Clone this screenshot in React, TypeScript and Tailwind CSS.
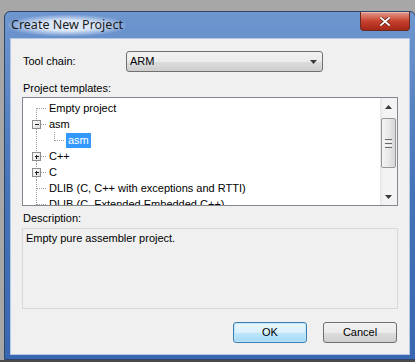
import React from "react";

const dot = "#9a9a9a";

function Gutter({ kind, first }: { kind: "leaf" | "minus" | "plus" | "child"; first?: boolean }) {
  const w = kind === "child" ? 43 : 26;
  return (
    <svg width={w} height={16} className="shrink-0" shapeRendering="crispEdges">
      {kind === "leaf" && (
        <>
          <line x1={13.5} y1={first ? 8 : 0} x2={13.5} y2={16} stroke={dot} strokeDasharray="1 1" />
          <line x1={14} y1={8.5} x2={24} y2={8.5} stroke={dot} strokeDasharray="1 1" />
        </>
      )}
      {(kind === "minus" || kind === "plus") && (
        <>
          <line x1={13.5} y1={0} x2={13.5} y2={4} stroke={dot} strokeDasharray="1 1" />
          <line x1={13.5} y1={13} x2={13.5} y2={16} stroke={dot} strokeDasharray="1 1" />
          <defs>
            <linearGradient id="bx" x1="0" y1="0" x2="1" y2="1">
              <stop offset="0" stopColor="#ffffff" />
              <stop offset="1" stopColor="#dcdcdc" />
            </linearGradient>
          </defs>
          <rect x={9.5} y={4.5} width={8} height={8} fill="url(#bx)" stroke="#8c8c8c" />
          <line x1={11.5} y1={8.5} x2={16} y2={8.5} stroke="#222" />
          {kind === "plus" && <line x1={13.5} y1={6.5} x2={13.5} y2={11} stroke="#222" />}
          <line x1={18} y1={8.5} x2={24} y2={8.5} stroke={dot} strokeDasharray="1 1" />
        </>
      )}
      {kind === "child" && (
        <>
          <line x1={13.5} y1={0} x2={13.5} y2={16} stroke={dot} strokeDasharray="1 1" />
          <line x1={31.5} y1={0} x2={31.5} y2={8.5} stroke={dot} strokeDasharray="1 1" />
          <line x1={32} y1={8.5} x2={42} y2={8.5} stroke={dot} strokeDasharray="1 1" />
        </>
      )}
    </svg>
  );
}

function Row({ kind, text, first, selected }: { kind: "leaf" | "minus" | "plus" | "child"; text: string; first?: boolean; selected?: boolean }) {
  return (
    <div className="flex h-[16px] items-center whitespace-nowrap">
      <Gutter kind={kind} first={first} />
      {selected ? (
        <span className="flex h-[15px] items-center bg-[#3399ff] px-[2px] text-white">{text}</span>
      ) : (
        <span className="leading-[16px]">{text}</span>
      )}
    </div>
  );
}

function Arrow({ up }: { up?: boolean }) {
  return (
    <svg width={7} height={4} viewBox="0 0 7 4">
      {up ? <path d="M0 4 L3.5 0 L7 4 Z" fill="#3a3a3a" /> : <path d="M0 0 L7 0 L3.5 4 Z" fill="#3a3a3a" />}
    </svg>
  );
}

export default function App() {
  return (
    <div
      className="flex h-[362px] w-[415px] flex-col overflow-hidden bg-[#a7a7a7] text-[11px] text-black"
      style={{ fontFamily: '"Liberation Sans", Arial, sans-serif' }}
    >
      <div className="ml-[4px] mt-[11px] flex h-[349px] w-[412px] shrink-0 flex-col rounded-t-[6px] border border-[#2f4566] bg-gradient-to-b from-[#6f96cf] via-[#4674b9] to-[#3866b0]">
        {/* title bar */}
        <div className="flex h-[27px] items-start justify-between pl-[3px]">
          <div className="self-center rounded-[10px] bg-[radial-gradient(ellipse_at_center,rgba(225,236,250,0.95)_35%,rgba(200,220,245,0)_75%)] px-[3px] py-[2px]">
            <span
              className="text-[12.5px] leading-[16px] text-[#1b1b1b]"
              style={{ fontFamily: '"Noto Sans", "Open Sans", sans-serif' }}
            >
              Create New Project
            </span>
          </div>
          <div className="mr-[5px] flex h-[19px] w-[50px] items-center justify-center rounded-b-[4px] border border-t-0 border-[#6a2a22] bg-gradient-to-b from-[#e2988a] via-[#c8412e] to-[#a42618] shadow-[inset_0_1px_0_rgba(255,255,255,0.35)]">
            <svg width={10} height={9} viewBox="0 0 10 9">
              <path d="M1 1 L9 8 M9 1 L1 8" stroke="#5a1a12" strokeWidth={3.2} strokeLinecap="square" />
              <path d="M1 1 L9 8 M9 1 L1 8" stroke="#ffffff" strokeWidth={1.8} strokeLinecap="square" />
            </svg>
          </div>
        </div>
        {/* body */}
        <div className="px-[6px]">
          <div className="flex h-[315px] flex-col bg-[#f0f0f0] shadow-[0_0_0_1px_#b4c8e6]">
            {/* tool chain */}
            <div className="mt-[12px] flex h-[21px] items-center">
              <span className="w-[115px] pl-[12px]">Tool chain:</span>
              <div className="flex h-[21px] w-[197px] items-center justify-between rounded-[3px] border border-[#707070] bg-[linear-gradient(to_bottom,#f2f2f2_0%,#ebebeb_50%,#dddddd_51%,#cfcfcf_100%)] pl-[3px] pr-[5px]">
                <span>ARM</span>
                <Arrow />
              </div>
            </div>
            <div className="mt-[10px] pl-[12px] leading-[13px]">Project templates:</div>
            {/* tree */}
            <div className="ml-[11px] mt-[2px] flex h-[109px] w-[376px] border border-[#828790] bg-white">
              <div className="flex-1 overflow-hidden pt-[2px]">
                <Row kind="leaf" text="Empty project" first />
                <Row kind="minus" text="asm" />
                <Row kind="child" text="asm" selected />
                <Row kind="plus" text="C++" />
                <Row kind="plus" text="C" />
                <Row kind="leaf" text="DLIB (C, C++ with exceptions and RTTI)" />
                <Row kind="leaf" text="DLIB (C, Extended Embedded C++)" />
              </div>
              <div className="flex w-[17px] flex-col bg-[linear-gradient(to_right,#e6e6e6,#f3f3f3_20%,#f3f3f3)]">
                <div className="flex h-[17px] items-center justify-center">
                  <Arrow up />
                </div>
                <div className="flex-1 pt-[3px]">
                  <div className="mx-[1px] flex h-[50px] flex-col items-center justify-center gap-[1px] rounded-[2px] border border-[#979797] bg-[linear-gradient(to_right,#f4f4f4,#e8e8e8_50%,#d6d6d6)]">
                    <div className="h-[1px] w-[7px] bg-[#6b6b6b]" />
                    <div className="h-[1px] w-[7px] bg-[#f8f8f8]" />
                    <div className="h-[1px] w-[7px] bg-[#6b6b6b]" />
                    <div className="h-[1px] w-[7px] bg-[#f8f8f8]" />
                    <div className="h-[1px] w-[7px] bg-[#6b6b6b]" />
                  </div>
                </div>
                <div className="flex h-[17px] items-center justify-center">
                  <Arrow />
                </div>
              </div>
            </div>
            <div className="mt-[6px] pl-[12px] leading-[13px]">Description:</div>
            <div className="ml-[11px] mt-[3px] h-[81px] w-[376px] border border-[#d9d9d9] bg-[#f0f0f0] pl-[3px] pt-[3px] leading-[13px]">
              Empty pure assembler project.
            </div>
            {/* buttons */}
            <div className="mt-[13px] flex justify-end gap-[16px] pr-[12px]">
              <div className="flex h-[21px] w-[74px] items-center justify-center rounded-[3px] border border-[#3c7fb1] bg-[linear-gradient(to_bottom,#eaf6fd_0%,#d9f0fc_50%,#bee6fd_51%,#a7d9f5_100%)] shadow-[inset_0_0_0_1px_#bfe3f7]">
                OK
              </div>
              <div className="flex h-[21px] w-[74px] items-center justify-center rounded-[3px] border border-[#707070] bg-[linear-gradient(to_bottom,#f2f2f2_0%,#ebebeb_50%,#dddddd_51%,#cfcfcf_100%)]">
                Cancel
              </div>
            </div>
          </div>
        </div>
      </div>
      <div className="h-[2px] bg-[#4a4a4a]" />
    </div>
  );
}
